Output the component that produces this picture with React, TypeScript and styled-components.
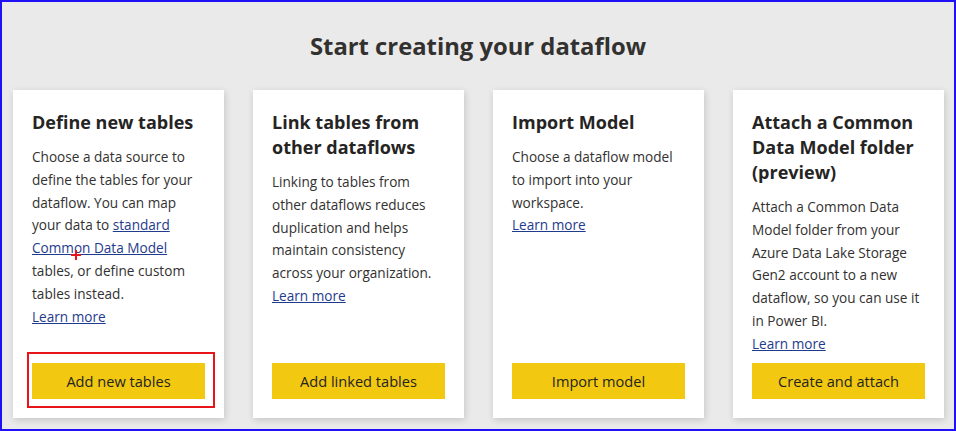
import styled, { createGlobalStyle } from 'styled-components';

const GlobalStyle = createGlobalStyle`
  html, body {
    margin: 0;
    padding: 0;
  }
  body {
    font-family: "Open Sans", "Noto Sans", sans-serif;
    background: #eaeaea;
  }
`;

const Page = styled.div`
  box-sizing: border-box;
  width: 956px;
  height: 431px;
  border: 2px solid #2010f5;
  background: #eaeaea;
  display: flex;
  flex-direction: column;
`;

const Title = styled.h1`
  margin: 28px 0 28px;
  font-size: 23.8px;
  line-height: 32px;
  font-weight: 700;
  color: #323130;
  text-align: center;
`;

const Cards = styled.div`
  display: grid;
  grid-template-columns: repeat(4, 211px);
  gap: 29px;
  padding-left: 11px;
`;

const Card = styled.div`
  position: relative;
  box-sizing: border-box;
  height: 328px;
  background: #fff;
  padding: 20px 19px 19px;
  display: flex;
  flex-direction: column;
  box-shadow: 1px 2px 7px rgba(0, 0, 0, 0.16);
`;

const Heading = styled.h2`
  margin: 0 0 11px;
  font-size: 18px;
  line-height: 25px;
  font-weight: 700;
  color: #252423;
`;

const Body = styled.p`
  margin: 0;
  font-size: 13.6px;
  line-height: 22.8px;
  color: #323130;
`;

const Link = styled.a`
  color: #1f3b8c;
  text-decoration: underline;
  cursor: pointer;
`;

const LearnMore = styled(Link)`
  display: block;
  font-size: 13.6px;
  line-height: 22.8px;
  align-self: flex-start;
`;

const Button = styled.button`
  margin-top: auto;
  flex-shrink: 0;
  height: 36px;
  width: 100%;
  border: none;
  background: #f2c811;
  color: #252423;
  font-family: inherit;
  font-size: 14.6px;
  cursor: pointer;
`;

const Highlight = styled.div`
  position: absolute;
  left: 14px;
  top: 262px;
  width: 188px;
  height: 56px;
  box-sizing: border-box;
  border: 2px solid #e8141b;
  pointer-events: none;
`;

const Cursor = styled.div`
  position: absolute;
  left: 58px;
  top: 160px;
  width: 10px;
  height: 10px;
  pointer-events: none;

  &::before,
  &::after {
    content: '';
    position: absolute;
    background: #e8141b;
  }
  &::before {
    left: 0;
    top: 4px;
    width: 10px;
    height: 2px;
  }
  &::after {
    left: 4px;
    top: 0;
    width: 2px;
    height: 10px;
  }
`;

export default function App() {
  return (
    <>
      <GlobalStyle />
      <Page>
        <Title>Start creating your dataflow</Title>
        <Cards>
          <Card>
            <Heading>Define new tables</Heading>
            <Body>
              Choose a data source to define the tables for your dataflow. You can map
              your data to <Link>standard Common Data Model</Link> tables, or define
              custom tables instead.
            </Body>
            <LearnMore>Learn more</LearnMore>
            <Button>Add new tables</Button>
            <Highlight />
            <Cursor />
          </Card>
          <Card>
            <Heading>Link tables from other dataflows</Heading>
            <Body>
              Linking to tables from other dataflows reduces duplication and helps
              maintain consistency across your organization.
            </Body>
            <LearnMore>Learn more</LearnMore>
            <Button>Add linked tables</Button>
          </Card>
          <Card>
            <Heading>Import Model</Heading>
            <Body>Choose a dataflow model to import into your workspace.</Body>
            <LearnMore>Learn more</LearnMore>
            <Button>Import model</Button>
          </Card>
          <Card>
            <Heading>Attach a Common Data Model folder (preview)</Heading>
            <Body>
              Attach a Common Data Model folder from your Azure Data Lake Storage Gen2
              account to a new dataflow, so you can use it in Power BI.
            </Body>
            <LearnMore>Learn more</LearnMore>
            <Button>Create and attach</Button>
          </Card>
        </Cards>
      </Page>
    </>
  );
}
